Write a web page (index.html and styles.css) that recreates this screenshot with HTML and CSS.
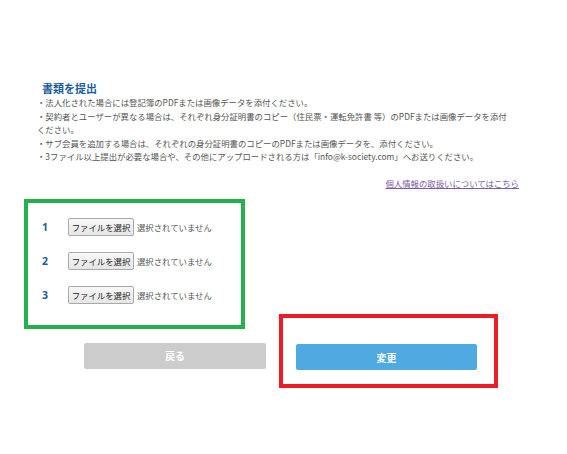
FILE: index.html
```html
<!DOCTYPE html>
<html lang="ja">
<head>
  <meta charset="UTF-8">
  <title>書類を提出</title>
  <link rel="stylesheet" href="styles.css">
</head>
<body>
  <div class="page">
    <div class="doc">
      <h2 class="doc-title">書類を提出</h2>
      <ul class="notes">
        <li>・法人化された場合には登記簿のPDFまたは画像データを添付ください。</li>
        <li>・契約者とユーザーが異なる場合は、それぞれ身分証明書のコピー（住民票・運転免許書 等）のPDFまたは画像データを添付<br>ください。</li>
        <li>・サブ会員を追加する場合は、それぞれの身分証明書のコピーのPDFまたは画像データを、添付ください。</li>
        <li>・3ファイル以上提出が必要な場合や、その他にアップロードされる方は「info@k-society.com」へお送りください。</li>
      </ul>
      <p class="privacy"><a href="#">個人情報の取扱いについてはこちら</a></p>
    </div>

    <div class="files">
      <div class="file-row">
        <span class="num">1</span>
        <span class="file-btn">ファイルを選択</span>
        <span class="file-name">選択されていません</span>
      </div>
      <div class="file-row">
        <span class="num">2</span>
        <span class="file-btn">ファイルを選択</span>
        <span class="file-name">選択されていません</span>
      </div>
      <div class="file-row">
        <span class="num">3</span>
        <span class="file-btn">ファイルを選択</span>
        <span class="file-name">選択されていません</span>
      </div>
    </div>

    <div class="actions">
      <button class="btn btn-back">戻る</button>
      <div class="submit-wrap">
        <button class="btn btn-submit">変更</button>
        <div class="mark"></div>
      </div>
    </div>
  </div>
</body>
</html>
```

FILE: styles.css
```css
body {
  margin: 0;
  background: #ffffff;
  font-family: "Noto Sans CJK JP", "Noto Sans", sans-serif;
  color: #555555;
}
.page {
  padding: 81px 0 40px 24px;
}
.doc {
  padding-left: 13px;
  width: 482px;
}
.doc-title {
  margin: 0 0 1px 5px;
  font-size: 11px;
  line-height: 14px;
  font-weight: bold;
  color: #1c5a9c;
}
.notes {
  list-style: none;
  margin: 0;
  padding: 0;
  font-size: 8.4px;
  line-height: 13.5px;
}
.privacy {
  margin: 13.5px 0 0;
  text-align: right;
  font-size: 8.4px;
  line-height: 13.5px;
}
.privacy a {
  color: #7a5aa6;
}
.files {
  width: 199px;
  margin-top: 8px;
  border: 4px solid #22b14c;
  padding: 15px 0 21px 14px;
  display: flex;
  flex-direction: column;
  gap: 16px;
}
.file-row {
  display: flex;
  align-items: center;
  height: 18px;
}
.num {
  width: 26px;
  font-family: "Noto Sans", sans-serif;
  font-size: 10.5px;
  font-weight: bold;
  color: #1c5a9c;
}
.file-btn {
  box-sizing: border-box;
  width: 66px;
  height: 18px;
  line-height: 16px;
  text-align: center;
  font-size: 8.4px;
  color: #222222;
  background: linear-gradient(#f8f8f8, #e6e6e6);
  border: 1px solid #a9a9a9;
  border-radius: 2px;
}
.file-name {
  margin-left: 3px;
  font-size: 8.4px;
  color: #555555;
}
.actions {
  display: flex;
  gap: 30px;
  margin: 14px 0 0 60px;
}
.btn {
  height: 26px;
  border: none;
  border-radius: 2px;
  color: #ffffff;
  font-family: "Noto Sans CJK JP", sans-serif;
  font-size: 10px;
  font-weight: bold;
}
.btn-back {
  width: 182px;
  background: #cccccc;
}
.btn-submit {
  width: 181px;
  background: #4eaae0;
}
.submit-wrap {
  position: relative;
}
.mark {
  position: absolute;
  left: -17px;
  right: -21px;
  top: -29px;
  bottom: -18px;
  border: 4px solid #ed1c24;
}
```
